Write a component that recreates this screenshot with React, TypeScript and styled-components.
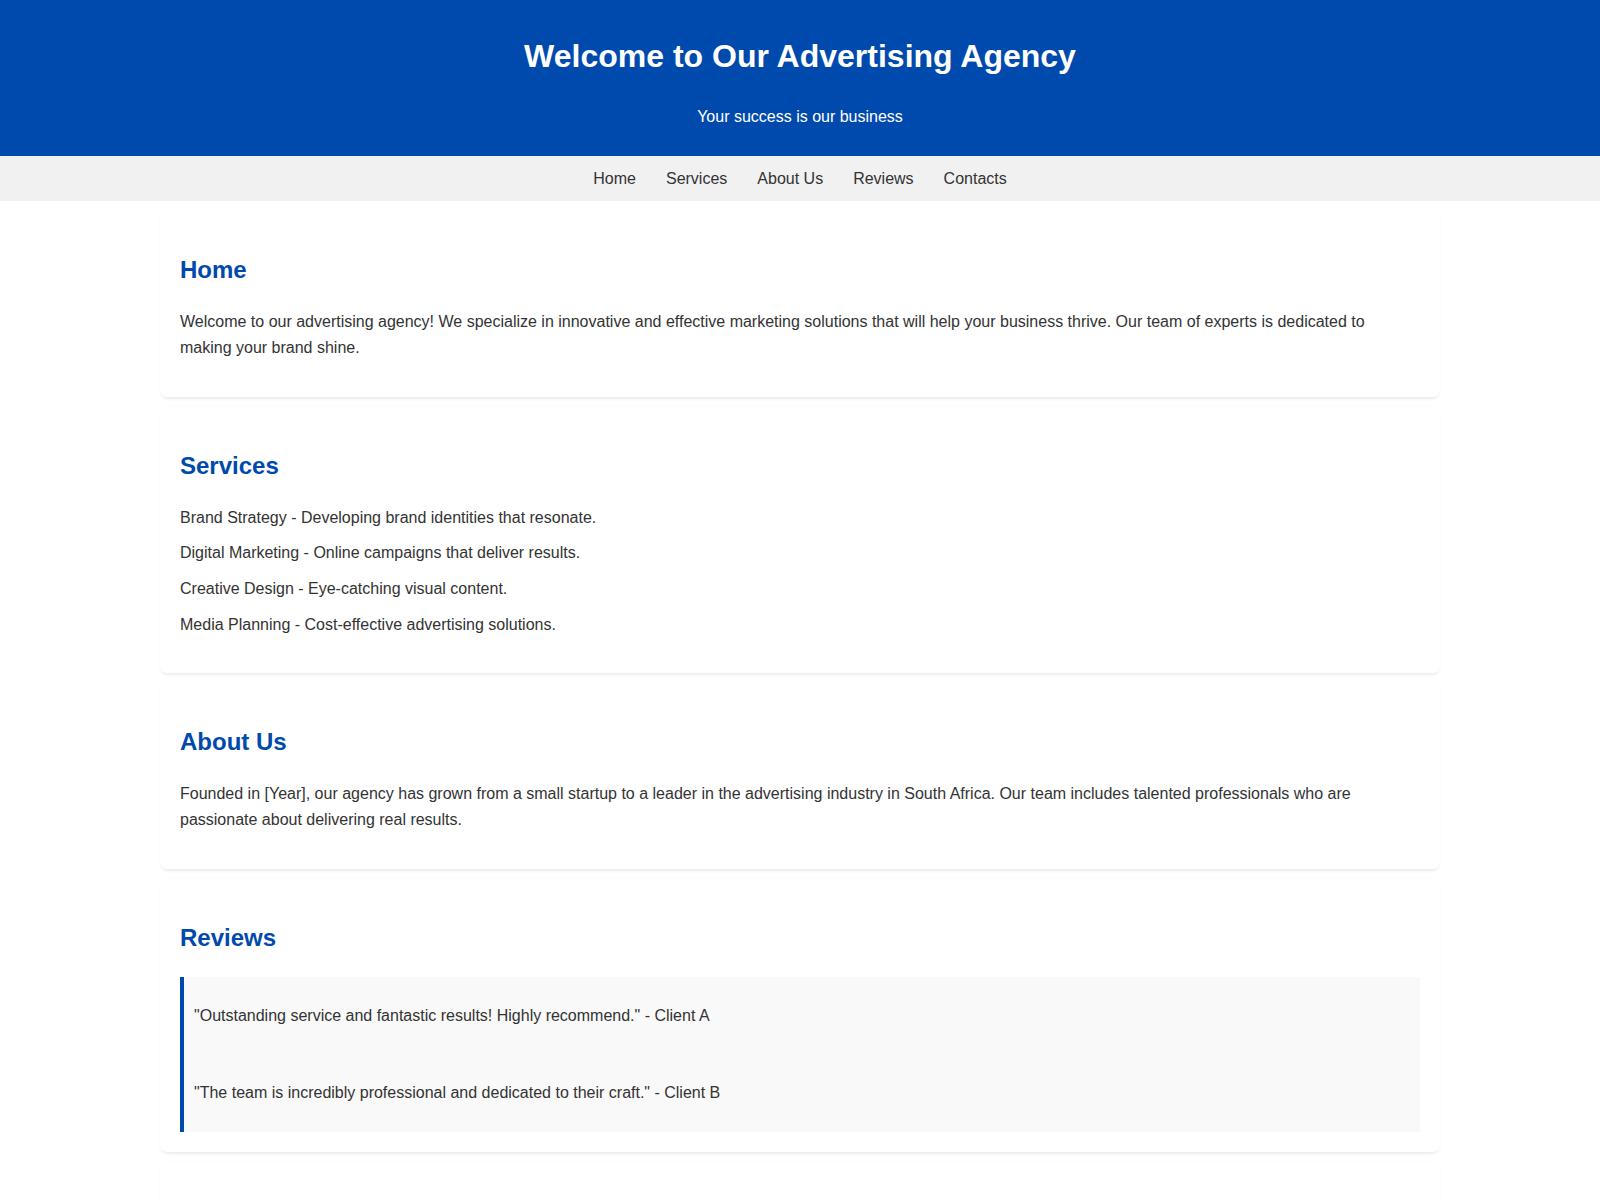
import React from 'react';
import styled, { createGlobalStyle } from 'styled-components';

const GlobalStyle = createGlobalStyle`
  body {
    margin: 0;
    font-family: "Liberation Sans", Arial, sans-serif;
    line-height: 1.6;
    color: #333;
    background: #fff;
  }
`;

const Header = styled.header`
  background: #004aad;
  color: #fff;
  padding: 10px 0;
  text-align: center;

  h1 {
    font-size: 2em;
    margin: 0.67em 0;
  }

  p {
    margin: 1em 0;
  }
`;

const Nav = styled.nav`
  background: #f1f1f1;
  padding: 10px 0;
  display: flex;
  justify-content: center;
  gap: 30px;
`;

const NavLink = styled.a`
  color: #333;
  text-decoration: none;
`;

const Main = styled.main`
  width: 80%;
  margin: 0 auto;
  padding-top: 10px;
  display: flex;
  flex-direction: column;
  gap: 10px;
`;

const Section = styled.section`
  background: #fff;
  padding: 20px;
  border-radius: 8px;
  box-shadow: 0 3px 4px -2px rgba(0, 0, 0, 0.12), 0 -1px 2px -1px rgba(0, 0, 0, 0.05);
`;

const Title = styled.h2`
  color: #004aad;
  font-size: 1.5em;
  margin: 0.83em 0;
`;

const Text = styled.p`
  margin: 1em 0;
`;

const ServiceList = styled.ul`
  list-style: none;
  padding: 0;
  margin: 1em 0;
`;

const ServiceItem = styled.li`
  margin-bottom: 10px;
`;

const Review = styled.blockquote`
  margin: 0;
  padding: 10px;
  background: #f9f9f9;
  border-left: 4px solid #004aad;
`;

const links = ['Home', 'Services', 'About Us', 'Reviews', 'Contacts'];

const services = [
  'Brand Strategy - Developing brand identities that resonate.',
  'Digital Marketing - Online campaigns that deliver results.',
  'Creative Design - Eye-catching visual content.',
  'Media Planning - Cost-effective advertising solutions.',
];

const reviews = [
  '"Outstanding service and fantastic results! Highly recommend." - Client A',
  '"The team is incredibly professional and dedicated to their craft." - Client B',
];

export default function App() {
  return (
    <>
      <GlobalStyle />
      <Header>
        <h1>Welcome to Our Advertising Agency</h1>
        <p>Your success is our business</p>
      </Header>
      <Nav>
        {links.map((l) => (
          <NavLink key={l} href={`#${l.toLowerCase().replace(' ', '')}`}>{l}</NavLink>
        ))}
      </Nav>
      <Main>
        <Section id="home">
          <Title>Home</Title>
          <Text>
            Welcome to our advertising agency! We specialize in innovative and effective marketing solutions that will help your business thrive. Our team of experts is dedicated to making your brand shine.
          </Text>
        </Section>
        <Section id="services">
          <Title>Services</Title>
          <ServiceList>
            {services.map((s) => (
              <ServiceItem key={s}>{s}</ServiceItem>
            ))}
          </ServiceList>
        </Section>
        <Section id="aboutus">
          <Title>About Us</Title>
          <Text>
            Founded in [Year], our agency has grown from a small startup to a leader in the advertising industry in South Africa. Our team includes talented professionals who are passionate about delivering real results.
          </Text>
        </Section>
        <Section id="reviews">
          <Title>Reviews</Title>
          {reviews.map((r) => (
            <Review key={r}>
              <Text>{r}</Text>
            </Review>
          ))}
        </Section>
        <Section id="contacts">
          <Title>Contacts</Title>
          <Text>Email: info@agency.co.za</Text>
          <Text>Phone: +27 11 123 4567</Text>
        </Section>
      </Main>
    </>
  );
}
